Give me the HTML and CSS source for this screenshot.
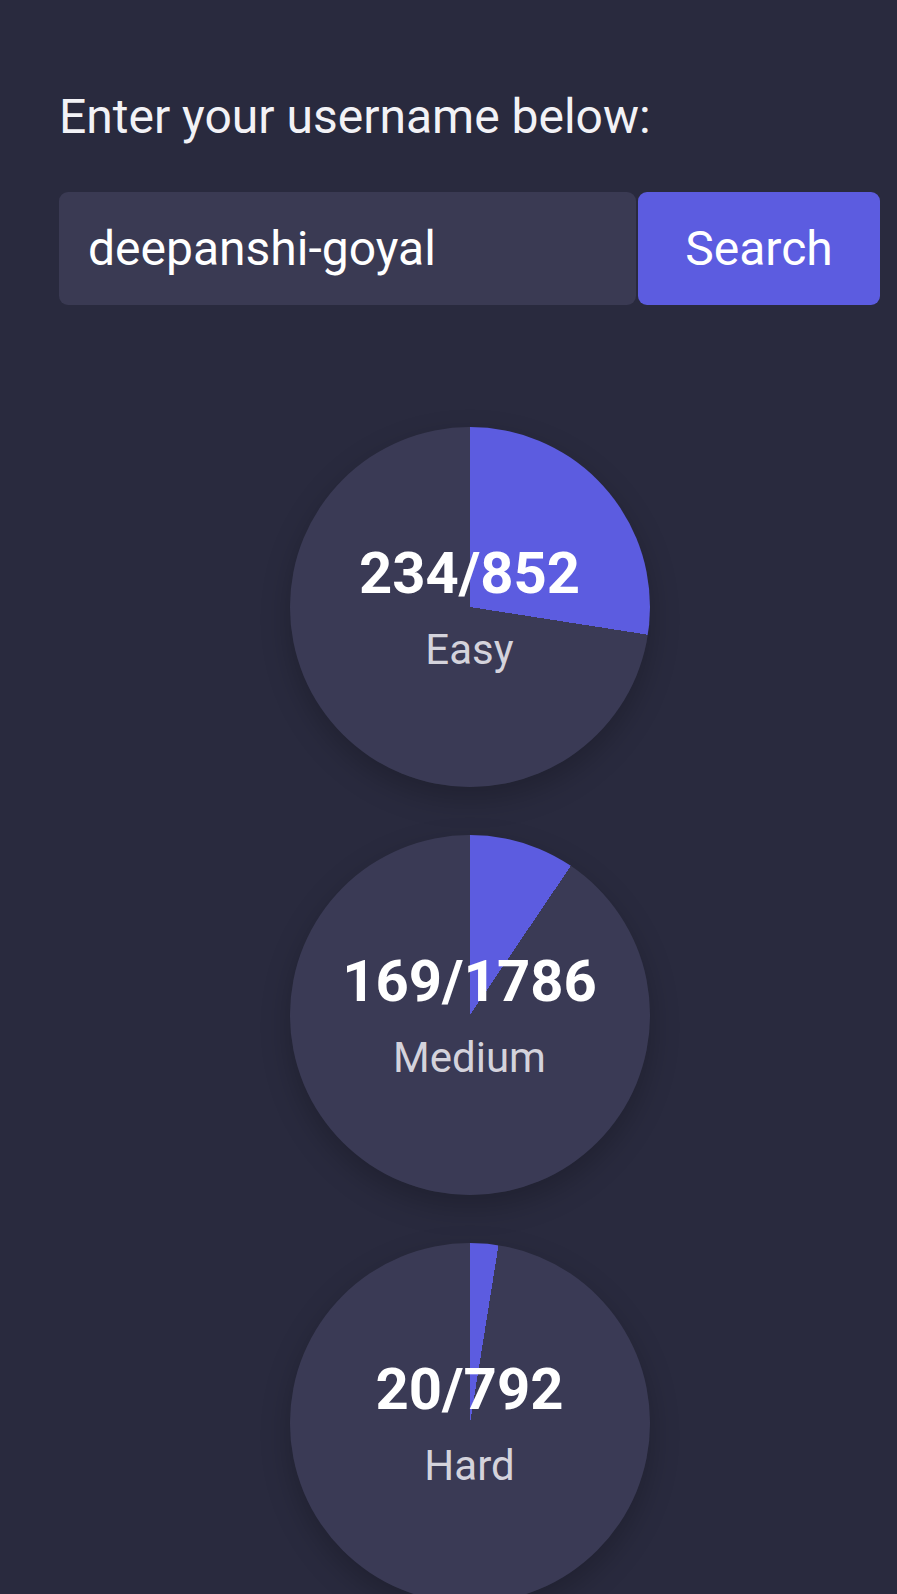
FILE: index.html
```html
<!DOCTYPE html>
<html lang="en">
<head>
<meta charset="utf-8">
<title>LeetCode Stats</title>
<link rel="stylesheet" href="styles.css">
</head>
<body>
<main class="app">
  <label class="prompt" for="user">Enter your username below:</label>
  <form class="search">
    <input id="user" class="search-input" type="text" value="deepanshi-goyal">
    <button class="search-btn" type="button">Search</button>
  </form>
  <section class="stats">
    <div class="pie" style="--p: 27.46%">
      <div class="pie-num">234/852</div>
      <div class="pie-label">Easy</div>
    </div>
    <div class="pie" style="--p: 9.46%">
      <div class="pie-num">169/1786</div>
      <div class="pie-label">Medium</div>
    </div>
    <div class="pie" style="--p: 2.53%">
      <div class="pie-num">20/792</div>
      <div class="pie-label">Hard</div>
    </div>
  </section>
</main>
</body>
</html>
```

FILE: styles.css
```css
html, body {
  margin: 0;
  padding: 0;
  background: #292a3e;
  height: 100%;
  overflow: hidden;
}
body {
  font-family: Roboto, "Noto Sans", sans-serif;
  color: #ffffff;
}
.app {
  box-sizing: border-box;
  width: 880px;
  padding: 89px 0 0 59px;
  display: flex;
  flex-direction: column;
}
.prompt {
  font-size: 48px;
  line-height: 56px;
  color: #f2f2f6;
}
.search {
  display: flex;
  margin: 47px 0 0 0;
  height: 113px;
  gap: 2px;
}
.search-input {
  flex: 1;
  min-width: 0;
  border: none;
  outline: none;
  border-radius: 9px;
  background: #3a3a53;
  color: #ffffff;
  font-family: Roboto, sans-serif;
  font-size: 48px;
  padding: 0 0 0 29px;
}
.search-btn {
  width: 242px;
  border: none;
  border-radius: 9px;
  background: #5c5ce0;
  color: #ffffff;
  font-family: Roboto, sans-serif;
  font-size: 48px;
  padding: 0;
}
.stats {
  display: flex;
  flex-direction: column;
  align-items: center;
  gap: 48px;
  margin-top: 122px;
}
.pie {
  width: 360px;
  height: 360px;
  border-radius: 50%;
  background: conic-gradient(#5c5ce0 0 var(--p), #3a3a55 var(--p) 100%);
  box-shadow: 0 12px 30px rgba(0, 0, 0, 0.22);
  display: flex;
  flex-direction: column;
  align-items: center;
  justify-content: center;
}
.pie-num {
  font-size: 58px;
  font-weight: 700;
  line-height: 70px;
  color: #ffffff;
  margin-top: 2px;
}
.pie-label {
  font-size: 42px;
  line-height: 56px;
  color: #d4d3dc;
  margin-top: 14px;
}
```
